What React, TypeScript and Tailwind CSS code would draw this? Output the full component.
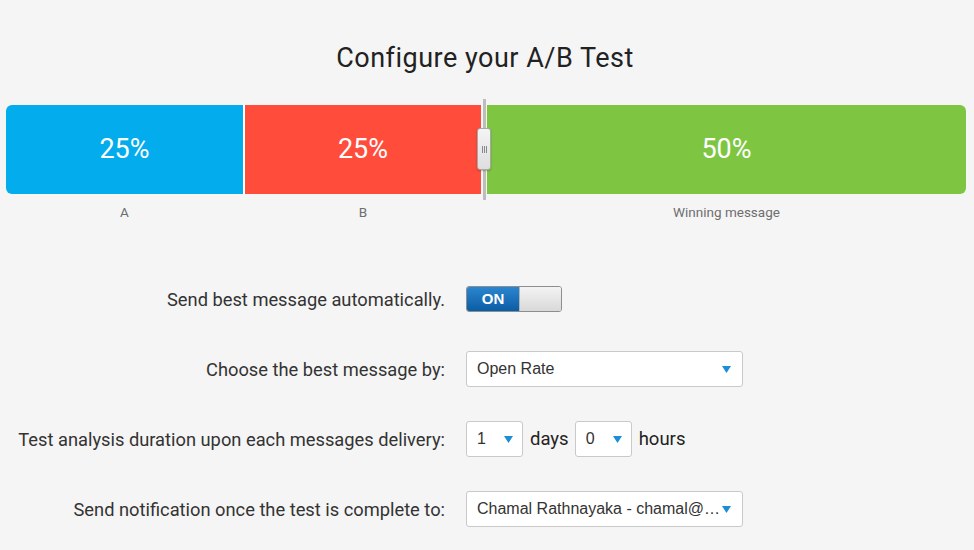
import React from 'react'

function Arrow() {
  return (
    <svg width="9" height="7" viewBox="0 0 9 7" className="shrink-0">
      <path d="M0 0 H9 L4.5 7 Z" fill="#1b8ed6" />
    </svg>
  )
}

function Select({ value, width, pr = 'pr-[11px]' }: { value: string; width: string; pr?: string }) {
  return (
    <div
      className={`${width} h-[36px] bg-white border border-[#c9c9c9] rounded-[3px] flex items-center justify-between pl-[10px] ${pr} text-[16px] text-[#333] whitespace-nowrap overflow-hidden`}
      style={{ fontFamily: '"Liberation Sans", Arial, sans-serif' }}
    >
      <span>{value}</span>
      <Arrow />
    </div>
  )
}

export default function App() {
  const rows = [
    'Send best message automatically.',
    'Choose the best message by:',
    'Test analysis duration upon each messages delivery:',
    'Send notification once the test is complete to:',
  ]
  return (
    <div
      className="w-[974px] h-[550px] bg-[#f5f5f5] overflow-hidden flex flex-col"
      style={{ fontFamily: 'Roboto, "Liberation Sans", sans-serif' }}
    >
      {/* title */}
      <h1 className="mt-[42px] h-8 leading-8 text-center text-[27px] tracking-[0.5px] text-[#222] pr-[4px]">
        Configure your A/B Test
      </h1>

      {/* split bar */}
      <div className="mt-[31px] ml-[6px] w-[960px] h-[89px] flex text-white text-[27px]">
        <div className="w-[237px] bg-[#03aced] rounded-l-[6px] flex items-center justify-center">25%</div>
        <div className="w-[2px] bg-white" />
        <div className="w-[236px] bg-[#ff4c3b] flex items-center justify-center">25%</div>
        <div className="relative w-[6px] flex justify-center">
          <div className="absolute -top-[6px] -bottom-[6px] w-[3px] bg-[#bdbdbd]" />
          <div className="absolute top-[23px] left-[-4px] w-[14px] h-[42px] rounded-[3px] border border-[#a8a8a8] bg-gradient-to-b from-[#f4f4f4] to-[#dedede] flex items-center justify-center gap-[1px] shadow-[0_1px_2px_rgba(0,0,0,0.25)]">
            <div className="w-px h-[7px] bg-[#888]" />
            <div className="w-px h-[7px] bg-[#888]" />
            <div className="w-px h-[7px] bg-[#888]" />
          </div>
        </div>
        <div className="flex-1 bg-[#7ec642] rounded-r-[6px] flex items-center justify-center">50%</div>
      </div>

      {/* labels */}
      <div className="mt-[10px] ml-[6px] w-[960px] h-4 flex text-[13.5px] leading-4 text-[#6e6e6e]">
        <div className="w-[237px] text-center">A</div>
        <div className="w-[2px]" />
        <div className="w-[236px] text-center">B</div>
        <div className="w-[6px]" />
        <div className="flex-1 text-center">Winning message</div>
      </div>

      {/* form */}
      <div className="mt-[44px] flex flex-col text-[18.3px] text-[#333]">
        <div className="h-[70px] flex items-center">
          <div className="w-[445px] pt-[2px] text-right whitespace-nowrap">{rows[0]}</div>
          <div className="ml-[21px] w-[96px] h-[26px] flex rounded-[3px] border border-[#8e8e8e] overflow-hidden">
            <div
              className="w-[52px] bg-gradient-to-b from-[#2a86cf] to-[#0a5da5] text-white font-bold text-[15px] flex items-center justify-center"
              style={{ fontFamily: '"Liberation Sans", Arial, sans-serif' }}
            >
              ON
            </div>
            <div className="flex-1 bg-gradient-to-b from-[#f3f3f3] to-[#d9d9d9] border-l border-[#b5b5b5]" />
          </div>
        </div>

        <div className="h-[70px] flex items-center">
          <div className="w-[445px] pt-[2px] text-right whitespace-nowrap">{rows[1]}</div>
          <div className="ml-[21px]">
            <Select value="Open Rate" width="w-[277px]" />
          </div>
        </div>

        <div className="h-[70px] flex items-center">
          <div className="w-[445px] pt-[2px] text-right whitespace-nowrap">{rows[2]}</div>
          <div className="ml-[21px] flex items-center text-[18.5px] text-[#222]">
            <Select value="1" width="w-[57px]" pr="pr-[9px]" />
            <span className="ml-[7px] mr-[6px] pt-[2px]">days</span>
            <Select value="0" width="w-[57px]" pr="pr-[9px]" />
            <span className="ml-[7px] pt-[2px]">hours</span>
          </div>
        </div>

        <div className="h-[70px] flex items-center">
          <div className="w-[445px] pt-[2px] text-right whitespace-nowrap">{rows[3]}</div>
          <div className="ml-[21px]">
            <Select value="Chamal Rathnayaka - chamal@…" width="w-[277px]" />
          </div>
        </div>
      </div>
    </div>
  )
}
